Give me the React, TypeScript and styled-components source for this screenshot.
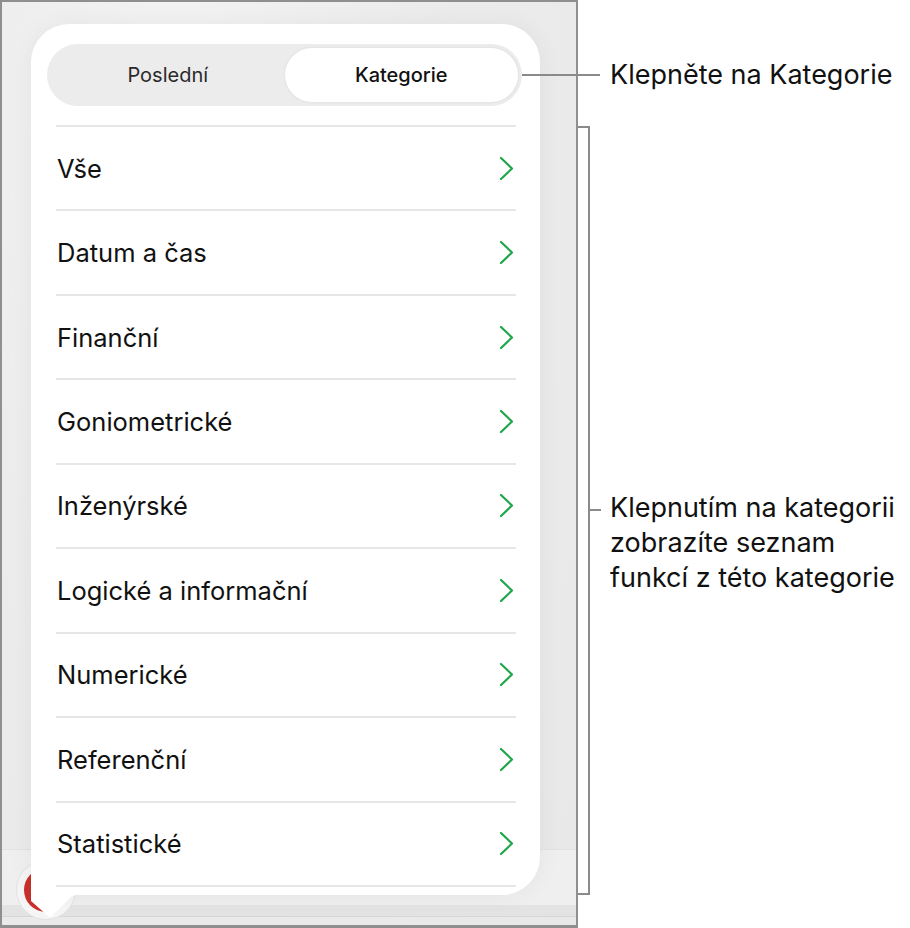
import React from "react";
import styled, { createGlobalStyle } from "styled-components";

const GlobalStyle = createGlobalStyle`
  html, body { margin: 0; padding: 0; background: #ffffff; }
  body { font-family: Inter, "Noto Sans", sans-serif; -webkit-font-smoothing: antialiased; }
`;

const Page = styled.div`
  width: 910px;
  height: 928px;
  display: flex;
  align-items: flex-start;
  background: #ffffff;
  overflow: hidden;
`;

const Device = styled.div`
  position: relative;
  z-index: 1;
  box-sizing: border-box;
  width: 578px;
  height: 928px;
  flex: none;
  border: 2px solid #8f8f8f;
  border-bottom-width: 3px;
  background: radial-gradient(ellipse at 30% 10%, #f3f3f3 0%, #ececec 45%, #e8e8e8 100%);
  padding: 22px 0 0 29px;
  overflow: hidden;
`;

const Toolbar = styled.div`
  position: absolute;
  left: 0;
  right: 0;
  top: 847px;
  height: 66px;
  background: #efefef;
  border-top: 1px solid #e2e2e2;
  border-bottom: 1px solid #d6d6d6;
`;

const ToolbarBottom = styled.div`
  position: absolute;
  left: 0;
  right: 0;
  bottom: 0;
  height: 11px;
  background: #e3e3e3;
`;

const RecordButton = styled.div`
  position: absolute;
  left: 14px;
  top: 858px;
  width: 58px;
  height: 58px;
  border-radius: 50%;
  background: #f5f5f5;
  border: 1px solid #e2e2e2;
  display: flex;
  align-items: center;
  justify-content: center;
  &::after {
    content: "";
    width: 44px;
    height: 44px;
    border-radius: 50%;
    background: #c9302b;
  }
`;

const Popover = styled.div`
  position: relative;
  z-index: 1;
  box-sizing: border-box;
  width: 509px;
  height: 871px;
  background: #ffffff;
  border-radius: 38px 38px 38px 0;
  padding: 20px 18px 0 16px;
  box-shadow: 0 0 24px rgba(0, 0, 0, 0.05);
  display: flex;
  flex-direction: column;
`;

const Tail = styled.svg`
  position: absolute;
  left: 0;
  bottom: -24px;
  width: 60px;
  height: 25px;
`;

const Segmented = styled.div`
  box-sizing: border-box;
  height: 62px;
  border-radius: 31px;
  background: #ececec;
  padding: 4px;
  display: grid;
  grid-template-columns: 1fr 1fr;
  flex: none;
`;

const Segment = styled.div<{ $active?: boolean }>`
  display: flex;
  align-items: center;
  justify-content: center;
  border-radius: 28px;
  font-size: 20px;
  font-weight: ${(p) => (p.$active ? 500 : 400)};
  color: ${(p) => (p.$active ? "#111" : "#2a2a2a")};
  background: ${(p) => (p.$active ? "#ffffff" : "transparent")};
  box-shadow: ${(p) => (p.$active ? "0 0 0 1.5px #e6e6e6" : "none")};
`;

const List = styled.div`
  margin: 19px 6px 0 9px;
  border-top: 2px solid #e6e6e6;
`;

const Row = styled.div`
  box-sizing: border-box;
  height: 84.45px;
  display: flex;
  align-items: center;
  justify-content: space-between;
  border-bottom: 2px solid #e6e6e6;
  padding: 0 2px 0 1px;
`;

const Label = styled.span`
  font-size: 25.5px;
  color: #111;
`;

const Chevron = styled.svg`
  width: 15px;
  height: 25px;
  flex: none;
`;

const Callouts = styled.div`
  position: relative;
  z-index: 2;
  flex: 1;
  height: 928px;
`;

const Leader = styled.div`
  position: absolute;
  left: -56px;
  top: 74px;
  width: 78px;
  height: 2px;
  background: #8a8a8a;
`;

const Bracket = styled.div`
  position: absolute;
  left: 0px;
  top: 126px;
  width: 12px;
  height: 769px;
  box-sizing: border-box;
  border: 2px solid #8a8a8a;
  border-left: none;
  &::after {
    content: "";
    position: absolute;
    left: 10px;
    top: 381px;
    width: 13px;
    height: 2px;
    background: #8a8a8a;
  }
`;

const CalloutText = styled.div<{ $top: number }>`
  position: absolute;
  left: 32px;
  top: ${(p) => p.$top}px;
  font-size: 27px;
  line-height: 35px;
  color: #111;
  white-space: nowrap;
`;

const items = [
  "Vše",
  "Datum a čas",
  "Finanční",
  "Goniometrické",
  "Inženýrské",
  "Logické a informační",
  "Numerické",
  "Referenční",
  "Statistické",
];

export default function App() {
  return (
    <>
      <GlobalStyle />
      <Page>
        <Device>
          <Toolbar>
            <ToolbarBottom />
          </Toolbar>
          <RecordButton />
          <Popover>
            <Segmented>
              <Segment>Poslední</Segment>
              <Segment $active>Kategorie</Segment>
            </Segmented>
            <List>
              {items.map((t) => (
                <Row key={t}>
                  <Label>{t}</Label>
                  <Chevron viewBox="0 0 15 25">
                    <path d="M2 2 L13 12.5 L2 23" fill="none" stroke="#1ea64b" strokeWidth="2.2" strokeLinecap="round" strokeLinejoin="round" />
                  </Chevron>
                </Row>
              ))}
            </List>
            <Tail viewBox="0 0 60 25">
              <path d="M0 0 L0 7 L17 22 Q19 24 21 22 L40 3 Q43 1 50 0 L0 0 Z" fill="#ffffff" />
            </Tail>
          </Popover>
        </Device>
        <Callouts>
          <Leader />
          <CalloutText $top={57}>Klepněte na Kategorie</CalloutText>
          <Bracket />
          <CalloutText $top={490}>
            Klepnutím na kategorii
            <br />
            zobrazíte seznam
            <br />
            funkcí z této kategorie
          </CalloutText>
        </Callouts>
      </Page>
    </>
  );
}
